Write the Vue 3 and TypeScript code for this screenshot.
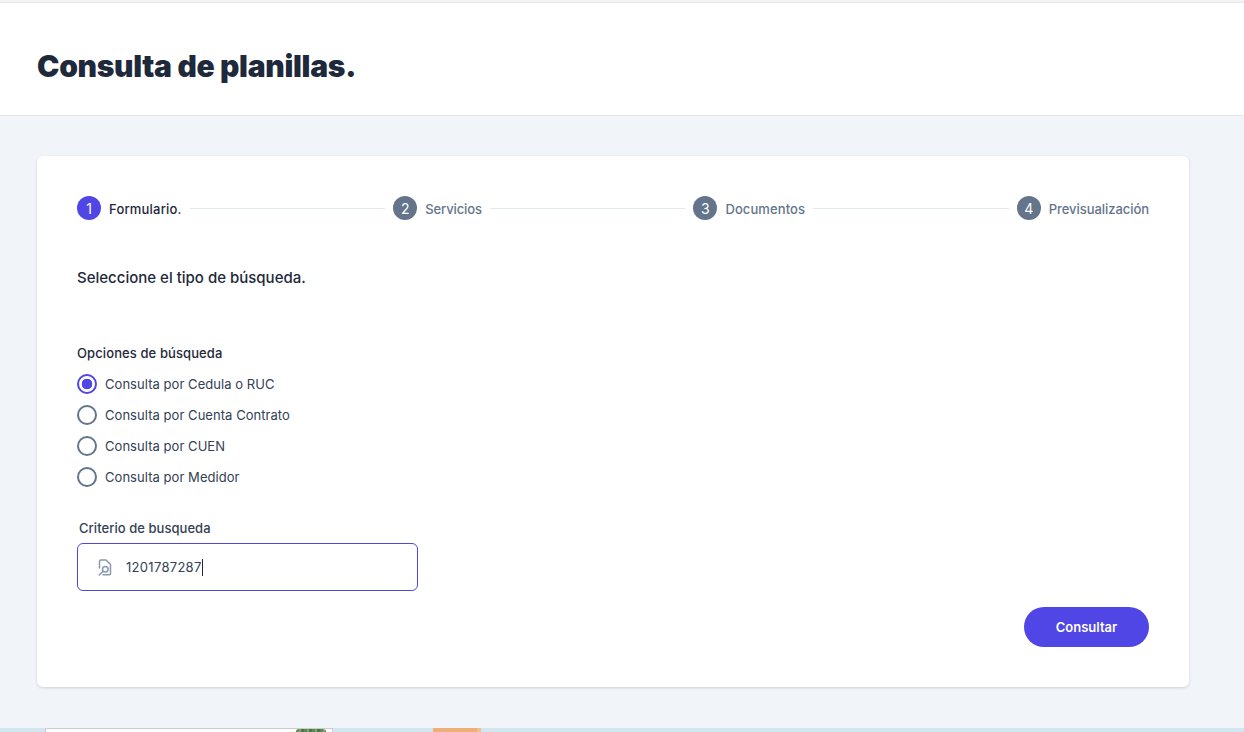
<script setup lang="ts">
import { ref } from 'vue'

interface Step { n: number; label: string; active?: boolean }

const steps: Step[] = [
  { n: 1, label: 'Formulario.', active: true },
  { n: 2, label: 'Servicios' },
  { n: 3, label: 'Documentos' },
  { n: 4, label: 'Previsualización' },
]
const options = [
  'Consulta por Cedula o RUC',
  'Consulta por Cuenta Contrato',
  'Consulta por CUEN',
  'Consulta por Medidor',
]
const selected = ref(options[0])
const criterio = ref('1201787287')
</script>

<template>
  <div class="page">
    <div class="topline"></div>
    <header class="head">
      <h1>Consulta de planillas.</h1>
    </header>
    <main class="body">
      <section class="card">
        <ol class="steps">
          <template v-for="(s, i) in steps" :key="s.n">
            <li class="step" :class="{ active: s.active }">
              <span class="num">{{ s.n }}</span>
              <span class="lbl">{{ s.label }}</span>
            </li>
            <li v-if="i < steps.length - 1" class="line" aria-hidden="true"></li>
          </template>
        </ol>

        <h2>Seleccione el tipo de búsqueda.</h2>

        <div class="group-label">Opciones de búsqueda</div>
        <div class="radios">
          <label v-for="o in options" :key="o" class="radio">
            <input v-model="selected" type="radio" name="tipo" :value="o" />
            <span class="dot"></span>
            <span>{{ o }}</span>
          </label>
        </div>

        <label class="crit-label" for="crit">Criterio de busqueda</label>
        <div class="field">
          <svg class="ico" viewBox="0 0 18 18" width="18" height="18" fill="none" stroke="#8b98ab" stroke-width="1.5" stroke-linecap="round" stroke-linejoin="round">
            <path d="M3.5 10V3.2C3.5 2.5 4 2 4.7 2H10l4.5 4.6v9c0 .7-.5 1.2-1.2 1.2H7" />
            <circle cx="9.3" cy="11.2" r="2.8" />
            <path d="M7.2 13.2 3.2 17" />
          </svg>
          <span class="value">{{ criterio }}</span><span class="caret"></span>
        </div>

        <div class="actions">
          <button type="button" class="btn">Consultar</button>
        </div>
      </section>
    </main>
    <div class="strip">
      <div class="strip-box"><span class="leaf"></span></div>
      <div class="strip-orange"></div>
    </div>
  </div>
</template>

<style>
html, body { margin: 0; background: #f1f5f9; }
</style>

<style scoped>
.page {
  width: 1244px;
  height: 732px;
  overflow: hidden;
  display: flex;
  flex-direction: column;
  background: #f1f5f9;
  font-family: Inter, "Noto Sans", sans-serif;
  color: #1e293b;
}
.topline {
  height: 3px;
  background: linear-gradient(#f4f5f6, #f0f1f2 60%, #dfe1e4);
  flex: none;
}
.head {
  height: 113px;
  flex: none;
  box-sizing: border-box;
  background: #fff;
  border-bottom: 1px solid #e2e8f0;
  padding: 13px 37px 0;
  display: flex;
  align-items: center;
}
h1 {
  margin: 0;
  font-size: 30px;
  line-height: 36px;
  font-weight: 900;
  letter-spacing: -0.3px;
  color: #1e293b;
}
.body {
  flex: 1;
  min-height: 0;
  padding: 40px 55px 0 37px;
}
.card {
  height: 531px;
  box-sizing: border-box;
  background: #fff;
  border-radius: 6px;
  box-shadow: 0 1px 3px rgba(15, 23, 42, 0.16);
  padding: 40px 40px 0;
  display: flex;
  flex-direction: column;
}
.steps {
  list-style: none;
  margin: 0;
  padding: 0;
  display: flex;
  align-items: center;
  height: 24px;
}
.step {
  display: flex;
  align-items: center;
  gap: 8px;
  font-size: 13px;
  font-weight: 500;
  color: #64748b;
}
.step.active { color: #1e293b; }
.step.active .lbl { letter-spacing: 0.2px; }
.step:nth-child(3) .lbl { letter-spacing: -0.12px; }
.step:nth-child(5) .lbl { letter-spacing: 0.1px; }
.step:nth-child(7) .lbl { letter-spacing: -0.05px; }
.lbl { position: relative; top: 0.5px; }
.num {
  width: 24px;
  height: 24px;
  border-radius: 50%;
  background: #64748b;
  color: #fff;
  display: flex;
  align-items: center;
  justify-content: center;
  font-size: 14px;
  font-weight: 400;
}
.step.active .num { background: #4f46e5; }
.line {
  flex: 1;
  height: 1px;
  background: #e2e8f0;
  margin: 0 8px;
}
h2 {
  margin: 48px 0 0;
  font-size: 15px;
  line-height: 20px;
  font-weight: 500;
  color: #1e293b;
}
.group-label {
  margin-top: 55px;
  font-size: 13px;
  line-height: 20px;
  font-weight: 500;
  letter-spacing: 0.1px;
  color: #1e293b;
}
.radios {
  margin-top: 11px;
  display: flex;
  flex-direction: column;
  gap: 11px;
}
.radio {
  display: flex;
  align-items: center;
  gap: 8px;
  height: 20px;
  font-size: 13px;
  letter-spacing: 0.05px;
  color: #334155;
}
.radio input {
  position: absolute;
  opacity: 0;
  width: 0;
  height: 0;
}
.dot {
  width: 20px;
  height: 20px;
  box-sizing: border-box;
  border: 2px solid #64748b;
  border-radius: 50%;
  background: #fff;
}
.radio input:checked + .dot {
  border-color: #4f46e5;
  background: radial-gradient(circle, #4f46e5 0 5px, #fff 5.6px);
}
.crit-label {
  margin: 31px 0 0 2px;
  font-size: 13px;
  line-height: 20px;
  font-weight: 500;
  letter-spacing: 0.05px;
  color: #334155;
}
.field {
  margin-top: 5px;
  width: 341px;
  height: 48px;
  box-sizing: border-box;
  border: 1px solid #4f46e5;
  border-radius: 6px;
  display: flex;
  align-items: center;
  padding-left: 18px;
  font-size: 13px;
  color: #334155;
}
.value { letter-spacing: 0.3px; }
.ico { flex: none; margin-right: 12px; }
.caret {
  width: 1px;
  height: 17px;
  background: #1e293b;
}
.actions {
  margin-top: 16px;
  display: flex;
  justify-content: flex-end;
}
.btn {
  width: 125px;
  height: 40px;
  border: 0;
  border-radius: 20px;
  background: #4f46e5;
  color: #fff;
  font: 600 13px Inter, "Noto Sans", sans-serif;
}
.strip {
  height: 4px;
  flex: none;
  background: #d3e6ef;
  position: relative;
}
.strip-box {
  position: absolute;
  left: 45px;
  top: 0;
  width: 288px;
  height: 4px;
  box-sizing: border-box;
  background: #fff;
  border: 1px solid #c9cdd2;
  border-bottom: 0;
}
.leaf {
  position: absolute;
  left: 250px;
  top: 0;
  width: 30px;
  height: 4px;
  background: repeating-linear-gradient(90deg, #5c8a4f 0 3px, #7fa573 3px 5px, #4a7a44 5px 8px);
  border-radius: 5px 5px 2px 2px;
}
.strip-orange {
  position: absolute;
  left: 433px;
  top: 0;
  width: 48px;
  height: 4px;
  background: linear-gradient(90deg, #eeaf78 0 44px, #f3bf8c 44px);
}
</style>
